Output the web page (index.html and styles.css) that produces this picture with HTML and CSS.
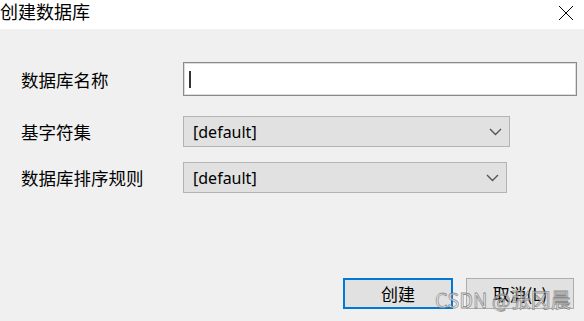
FILE: index.html
```html
<!DOCTYPE html>
<html lang="zh-CN">

<head>
  <meta charset="UTF-8">
  <meta name="viewport" content="width=device-width, initial-scale=1.0">
  <title>创建数据库</title>
  <link rel="stylesheet" href="styles.css">
</head>

<body>
  <div id="dialog">
    <div id="title-bar">
      <span class="title">创建数据库</span>
      <span class="close-btn">
        <svg width="16" height="16" viewBox="0 0 16 16">
          <path d="M1 1 L15 15 M15 1 L1 15" stroke="#000" stroke-width="1" fill="none" />
        </svg>
      </span>
    </div>

    <div id="form">
      <div class="row row-name">
        <label>数据库名称</label>
        <div class="text-input"><span class="caret"></span></div>
      </div>
      <div class="row row-charset">
        <label>基字符集</label>
        <div class="select select-charset">
          <span>[default]</span>
          <svg width="13" height="8" viewBox="0 0 13 8">
            <path d="M1 1 L6.5 6.5 L12 1" stroke="#555" stroke-width="1.4" fill="none" />
          </svg>
        </div>
      </div>
      <div class="row row-collation">
        <label>数据库排序规则</label>
        <div class="select select-collation">
          <span>[default]</span>
          <svg width="13" height="8" viewBox="0 0 13 8">
            <path d="M1 1 L6.5 6.5 L12 1" stroke="#555" stroke-width="1.4" fill="none" />
          </svg>
        </div>
      </div>
    </div>

    <div id="button-bar">
      <button class="btn btn-primary">创建</button>
      <button class="btn">取消(L)</button>
    </div>

    <div id="watermark">CSDN @张冈晨</div>
  </div>
</body>

</html>
```

FILE: styles.css
```css
body {
  margin: 0;
  font-family: "Noto Sans CJK SC", "Noto Sans", sans-serif;
  background: #f0f0f0;
  width: 584px;
  height: 321px;
  overflow: hidden;
}

#dialog {
  position: relative;
  height: 321px;
  display: flex;
  flex-direction: column;
}

#title-bar {
  height: 29px;
  background: #ffffff;
  display: flex;
  justify-content: space-between;
  align-items: flex-start;
}

#title-bar .title {
  font-size: 18px;
  line-height: 22px;
  color: #000;
}

#title-bar .close-btn {
  margin: 2px 10px 0 0;
  height: 16px;
}

#form {
  display: flex;
  flex-direction: column;
  padding: 33px 0 0 21px;
}

.row {
  display: flex;
  align-items: center;
}

.row label {
  width: 162px;
  font-size: 17.5px;
  color: #000;
}

.row-charset {
  margin-top: 20px;
}

.row-collation {
  margin-top: 15px;
}

.text-input {
  width: 392px;
  height: 32px;
  background: #ffffff;
  border: 1px solid #8a8a8a;
  box-shadow: inset 0 0 0 1px #dcdcdc;
  display: flex;
  align-items: center;
}

.caret {
  width: 2px;
  height: 17px;
  background: #333;
  margin-left: 5px;
}

.select {
  background: #e1e1e1;
  border: 1px solid #b4b4b4;
  display: flex;
  align-items: center;
  justify-content: space-between;
  padding: 0 7px 0 9px;
  box-sizing: border-box;
  height: 31px;
  font-family: "Noto Sans", sans-serif;
  font-size: 16px;
  color: #000;
}

.select-charset {
  width: 327px;
}

.select-collation {
  width: 324px;
}

#button-bar {
  display: flex;
  padding: 85px 0 0 343px;
  gap: 13px;
}

.btn {
  width: 108px;
  height: 31px;
  background: #e1e1e1;
  border: 1px solid #adadad;
  font-family: "Noto Sans CJK SC", sans-serif;
  font-size: 17px;
  color: #000;
  padding: 0;
  line-height: 1;
}

.btn-primary {
  width: 110px;
  border: 2px solid #0078d7;
}

#watermark {
  position: absolute;
  left: 435px;
  top: 287px;
  font-family: "Noto Sans CJK SC", sans-serif;
  font-size: 20px;
  line-height: 26px;
  color: rgba(255, 255, 255, 0.6);
  -webkit-text-stroke: 0.8px rgba(110, 110, 110, 0.75);
}
```
